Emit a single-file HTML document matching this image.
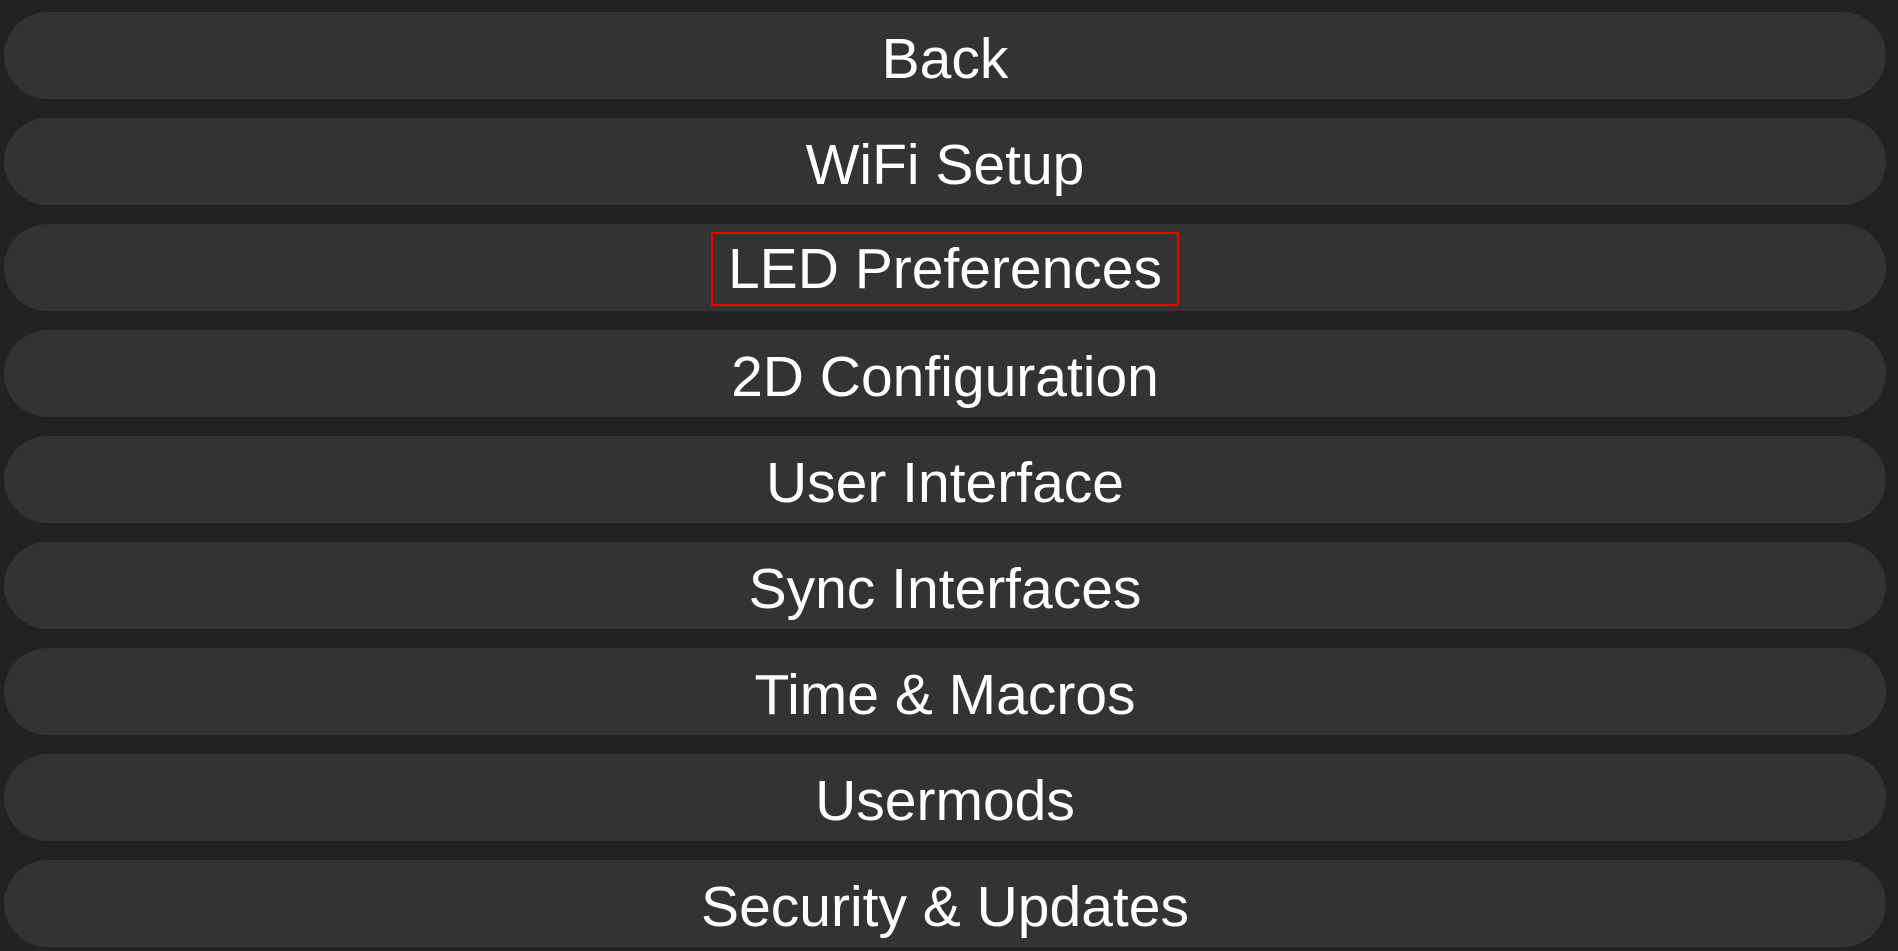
<!DOCTYPE html>
<html><head><style>
html,body{margin:0;padding:0;background:#222;width:1898px;height:939px;overflow:hidden}
.b{position:absolute;left:4px;width:1882px;height:87px;border-radius:44px;background:#333;color:#fff;box-sizing:border-box;padding-top:4px;
font-family:"Liberation Sans",sans-serif;font-size:57px;line-height:87px;text-align:center;top:0}
.f{display:inline-block;outline:2px solid #e00;padding:0 15px;margin-top:10px;vertical-align:top;line-height:70px}
</style></head><body>
<div class="b" style="top:12px">Back</div>
<div class="b" style="top:118px">WiFi Setup</div>
<div class="b" style="top:224px;padding-top:0"><span class="f">LED Preferences</span></div>
<div class="b" style="top:330px">2D Configuration</div>
<div class="b" style="top:436px">User Interface</div>
<div class="b" style="top:542px">Sync Interfaces</div>
<div class="b" style="top:648px">Time &amp; Macros</div>
<div class="b" style="top:754px">Usermods</div>
<div class="b" style="top:860px">Security &amp; Updates</div>
</body></html>
